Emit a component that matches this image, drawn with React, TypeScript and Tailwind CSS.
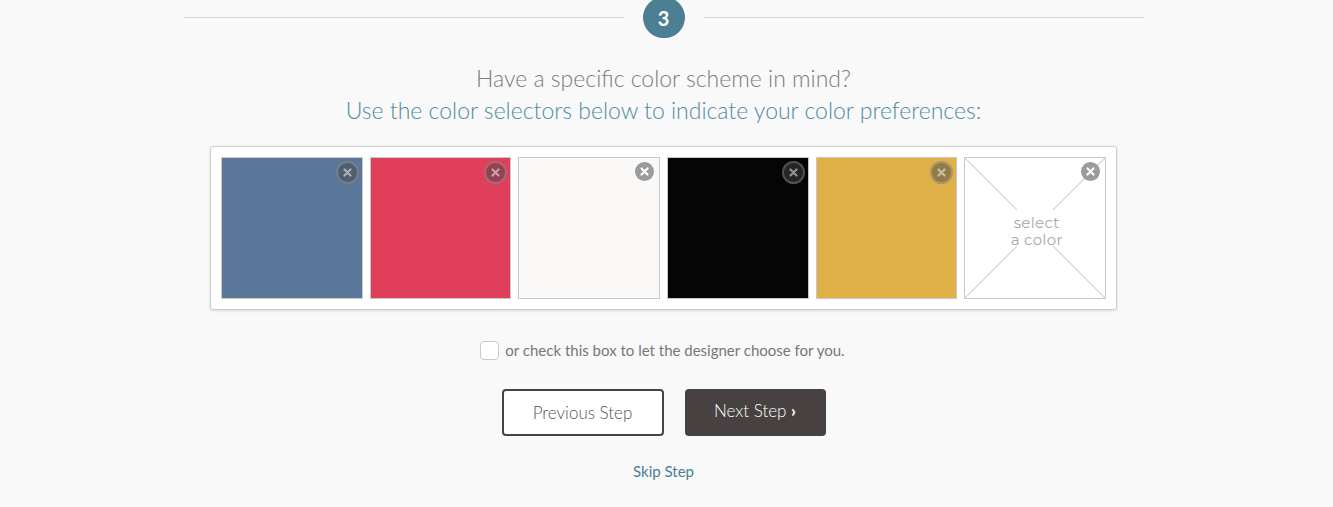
import React from "react";

const swatches = [
  { color: "#5a7799", x: "dark" },
  { color: "#df3f5a", x: "dark" },
  { color: "#faf9f8", x: "gray" },
  { color: "#050505", x: "dark" },
  { color: "#dfb048", x: "dark" },
];

function XBtn({ variant }: { variant: string }) {
  if (variant === "gray") {
    return (
      <div className="absolute right-[5px] top-[4px] w-[19px] h-[19px] rounded-full bg-[#9b9b9b] flex items-center justify-center">
        <svg width="9" height="9" viewBox="0 0 9 9">
          <path d="M1.5 1.5L7.5 7.5M7.5 1.5L1.5 7.5" stroke="#fff" strokeWidth="2.2" strokeLinecap="round" />
        </svg>
      </div>
    );
  }
  return (
    <div className="absolute right-[3px] top-[3px] w-[23px] h-[23px] rounded-full bg-[rgba(70,70,70,0.5)] border-2 border-[rgba(255,255,255,0.2)] flex items-center justify-center">
      <svg width="9" height="9" viewBox="0 0 9 9">
        <path d="M1.5 1.5L7.5 7.5M7.5 1.5L1.5 7.5" stroke="rgba(255,255,255,0.5)" strokeWidth="2.2" strokeLinecap="round" />
      </svg>
    </div>
  );
}

export default function App() {
  const font = { fontFamily: "'Source Sans Pro', Lato, 'Open Sans', sans-serif" };
  return (
    <div className="w-[1333px] h-[507px] bg-[#f9f9f9] overflow-hidden" style={font}>
      <div className="w-[1327px]">
        <div className="flex items-center w-[960px] mx-auto mt-[-3px] h-[41px]">
          <div className="flex-1 h-px bg-[#d4d4d4]" />
          <div className="mx-[19px] w-[42px] h-[41px] rounded-full bg-[#4a7f94] text-white font-bold text-[20px] flex items-center justify-center">
            3
          </div>
          <div className="flex-1 h-px bg-[#d4d4d4]" />
        </div>
        <div className="text-center mt-[24px] text-[23px] font-light leading-[32px]">
          <div className="text-[#7b7b7b]">Have a specific color scheme in mind?</div>
          <div className="text-[#4f8aa6]">Use the color selectors below to indicate your color preferences:</div>
        </div>
        <div className="mx-auto mt-[20px] w-[907px] h-[164px] bg-white border border-[#cdcdcd] rounded-[3px] shadow-[0_1px_3px_rgba(0,0,0,0.12)] flex gap-[7px] px-[10px] py-[10px]">
          {swatches.map((s, i) => (
            <div
              key={i}
              className="relative w-[142px] h-[142px] border border-[#c8c8c8]"
              style={{ backgroundColor: s.color }}
            >
              <XBtn variant={s.x} />
            </div>
          ))}
          <div className="relative w-[142px] h-[142px] border border-[#c8c8c8] bg-white overflow-hidden">
            <svg className="absolute inset-0" width="140" height="140" viewBox="0 0 140 140">
              <path d="M0 0L52 52M140 0L88 52M0 140L52 88M140 140L88 88" stroke="#dcdcdc" strokeWidth="1.5" />
            </svg>
            <div
              className="absolute inset-0 pt-[5px] pl-[3px] flex flex-col items-center justify-center text-[#a8a8a8] text-[15px] leading-[17px] tracking-[0.3px]"
              style={{ fontFamily: "Montserrat, 'Open Sans', sans-serif" }}
            >
              <span>select</span>
              <span>a color</span>
            </div>
            <XBtn variant="gray" />
          </div>
        </div>
        <div className="flex items-center justify-center mt-[29px] gap-[6px] pr-[2px]">
          <div className="w-[19px] h-[19px] rounded-[4px] border border-[#c9c9c9] bg-white" />
          <span className="text-[15px] text-[#777]">or check this box to let the designer choose for you.</span>
        </div>
        <div className="flex justify-center gap-[21px] mt-[27px]">
          <button className="w-[162px] h-[47px] border-2 border-[#444] rounded-[4px] bg-white text-[#555] text-[17px] font-light pt-[2px]">
            Previous Step
          </button>
          <button className="w-[141px] h-[47px] rounded-[4px] bg-[#474241] text-white text-[17px] font-light pb-[2px]">
            Next Step <span className="font-bold">›</span>
          </button>
        </div>
        <div className="text-center mt-[24px] text-[15px] text-[#4a7f94]">Skip Step</div>
      </div>
    </div>
  );
}
